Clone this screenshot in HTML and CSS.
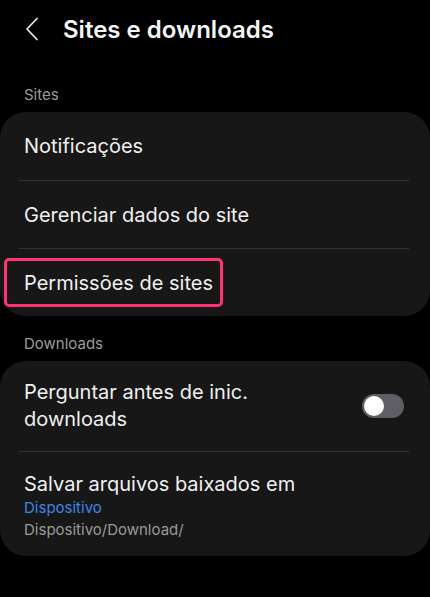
FILE: index.html
```html
<!DOCTYPE html>
<html lang="pt">
<head>
	<meta charset="UTF-8">
	<title>Sites e downloads</title>
	<link rel="stylesheet" href="styles.css">
</head>
<body>
	<div class="topbar">
		<span class="back">
			<svg width="14" height="24" viewBox="0 0 14 24"><path d="M12 1.5 L2 12 L12 22.5" fill="none" stroke="#e8e8e8" stroke-width="1.8" stroke-linecap="round" stroke-linejoin="round"/></svg>
		</span>
		<h1 class="title">Sites e downloads</h1>
	</div>

	<div class="label">Sites</div>
	<div class="card">
		<div class="row">Notificações</div>
		<div class="row">Gerenciar dados do site</div>
		<div class="row"><span class="mark">Permissões de sites</span></div>
	</div>

	<div class="label label-dl">Downloads</div>
	<div class="card">
		<div class="row row-switch">
			<span class="row-text">Perguntar antes de inic.<br>downloads</span>
			<span class="switch"><span class="knob"></span></span>
		</div>
		<div class="row row-save">
			<div class="save-title">Salvar arquivos baixados em</div>
			<div class="save-blue">Dispositivo</div>
			<div class="save-path">Dispositivo/Download/</div>
		</div>
	</div>
</body>
</html>
```

FILE: styles.css
```css
*{padding: 0;margin: 0;box-sizing: border-box;}
body{
	background: #000;
	color: #f0f0f0;
	font-family: Inter, Roboto, "Noto Sans", sans-serif;
	width: 430px;
}
.topbar{
	height: 58px;
	display: flex;
	align-items: center;
	padding-left: 25px;
}
.back{
	display: flex;
	width: 38px;
}
.title{
	font-size: 24px;
	font-weight: 600;
	color: #f4f4f4;
}
.label{
	font-size: 15px;
	line-height: 20px;
	color: #9b9b9b;
	padding-left: 24px;
	margin: 27px 0 7px;
}
.label-dl{
	margin-top: 18px;
}
.card{
	background: #171717;
	border-radius: 26px;
	padding: 0 21px 0 19px;
}
.row{
	height: 68px;
	display: flex;
	align-items: center;
	font-size: 20px;
	padding-left: 5px;
	border-top: 1px solid #333;
}
.row:first-child{
	border-top: none;
}
.mark{
	display: flex;
	align-items: center;
	height: 49px;
	margin-left: -20px;
	padding: 0 7px 0 17px;
	border: 3px solid #ff3370;
	border-radius: 5px;
}
.row-switch{
	height: 90px;
	justify-content: space-between;
	line-height: 27px;
}
.switch{
	width: 42px;
	height: 24px;
	border-radius: 12px;
	background: #5f5e64;
	display: flex;
	align-items: center;
	padding-left: 2px;
	margin-right: 5px;
}
.knob{
	width: 20px;
	height: 20px;
	border-radius: 50%;
	background: #fff;
}
.row-save{
	height: 105px;
	display: block;
	padding-top: 19px;
}
.save-title{
	line-height: 26px;
}
.save-blue{
	font-size: 15px;
	line-height: 22px;
	color: #3f84e8;
}
.save-path{
	font-size: 15px;
	line-height: 22px;
	color: #9a9a9a;
}
```
